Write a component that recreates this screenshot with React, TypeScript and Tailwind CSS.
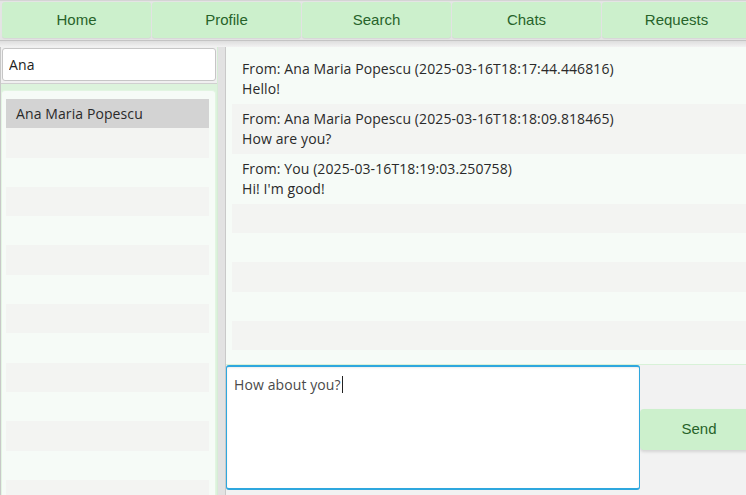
import { useState } from "react";

const tabs = ["Home", "Profile", "Search", "Chats", "Requests"];

const messages = [
  { from: "Ana Maria Popescu", at: "2025-03-16T18:17:44.446816", text: "Hello!" },
  { from: "Ana Maria Popescu", at: "2025-03-16T18:18:09.818465", text: "How are you?" },
  { from: "You", at: "2025-03-16T18:19:03.250758", text: "Hi! I'm good!" },
];

const ui = { fontFamily: '"Open Sans", "Noto Sans", sans-serif' };
const arial = { fontFamily: '"Liberation Sans", Arial, sans-serif' };

export default function App() {
  const [search, setSearch] = useState("Ana");
  const draft = "How about you?";

  return (
    <div className="flex h-[495px] w-[746px] flex-col overflow-hidden bg-[#f0f0f0]" style={ui}>
      <div className="flex h-[41px] shrink-0 gap-px overflow-hidden border-t border-b border-t-[#d4d4d4] border-b-[#c4c4c4] bg-[#e4e4e4] pl-[2px] pt-px pb-[2px]">
        {tabs.map((t) => (
          <button
            key={t}
            className="h-[36px] w-[149px] shrink-0 rounded-[3px] bg-[#ccf0cc] text-[15px] text-[#27632a] shadow-[0_1px_1px_rgba(0,0,0,0.06)]"
            style={arial}
          >
            {t}
          </button>
        ))}
      </div>
      <div className="h-[6px] shrink-0 bg-gradient-to-b from-[#dedede] to-[#f2f2f2]" />

      <div className="flex min-h-0 flex-1 border-l border-[#c8c8c8]">
        {/* contacts */}
        <div className="flex w-[216px] shrink-0 flex-col bg-[#f0f0f0]">
          <input
            value={search}
            onChange={(e) => setSearch(e.target.value)}
            className="mx-px mt-px h-[33px] shrink-0 rounded-[3px] border border-[#c6c6c6] bg-white px-[6px] text-[14px] tracking-[0.1px] text-[#222] outline-none"
          />
          <div className="mt-[2px] flex min-h-0 flex-1 flex-col border-t border-[#d0d0d0] bg-[#dcf3dc] pr-px pt-[6px]">
            <div className="flex-1 overflow-hidden rounded-t-[4px] border border-b-0 border-[#e2f5e2] bg-[#f6fbf7] pt-[8px] pl-[4px] pr-[6px]">
              {Array.from({ length: 14 }).map((_, i) => (
                <div
                  key={i}
                  className={`h-[29.3px] pl-[10px] text-[14px] leading-[29px] tracking-[0.1px] text-[#2a2a2a] ${
                    i === 0 ? "bg-[#d3d3d3]" : i % 2 === 1 ? "bg-[#f3f4f2]" : ""
                  }`}
                >
                  {i === 0 ? "Ana Maria Popescu" : ""}
                </div>
              ))}
            </div>
          </div>
        </div>

        {/* divider */}
        <div className="w-[9px] shrink-0 border-l border-r border-l-[#d6ecd6] border-r-[#c9c9c9] bg-[#e2e2e2]" />

        {/* chat */}
        <div className="flex min-w-0 flex-1 flex-col">
          <div className="h-[318px] shrink-0 overflow-hidden border-b border-[#d8f2d8] bg-[#f6fbf7] pt-[7px] pl-[6px]">
            {messages.map((m, i) => (
              <div
                key={i}
                className={`h-[50px] pt-[5px] pl-[10px] text-[14px] leading-[20px] tracking-[0.1px] text-[#2a2a2a] ${
                  i % 2 === 1 ? "bg-[#f3f4f2]" : ""
                }`}
              >
                <div>
                  From: {m.from} ({m.at})
                </div>
                <div>{m.text}</div>
              </div>
            ))}
            {Array.from({ length: 6 }).map((_, i) => (
              <div key={i} className={`h-[29.2px] ${i % 2 === 0 ? "bg-[#f3f4f2]" : ""}`} />
            ))}
          </div>

          <div className="flex flex-1 bg-[#f2f2f2] pb-[5px]">
            <div className="h-[125px] w-[414px] shrink-0 rounded-[3px] border-2 border-x-[1.5px] border-[#2ea7de] bg-white px-[7px] pt-[6px] text-[14px] leading-[20px] tracking-[0.1px] text-[#4a4a4a] shadow-[inset_0_1px_2px_rgba(0,0,0,0.08)]">
              {draft}
              <span className="ml-px inline-block h-[17px] w-px translate-y-[3px] bg-[#222]" />
            </div>
            <div className="flex flex-1 items-center overflow-hidden pt-[4px]">
              <button
                className="h-[41px] w-[118px] shrink-0 rounded-[4px] bg-[#ccf0cc] text-[15px] text-[#27632a] shadow-[0_2px_3px_rgba(0,0,0,0.12)]"
                style={arial}
              >
                Send
              </button>
            </div>
          </div>
        </div>
      </div>
    </div>
  );
}
